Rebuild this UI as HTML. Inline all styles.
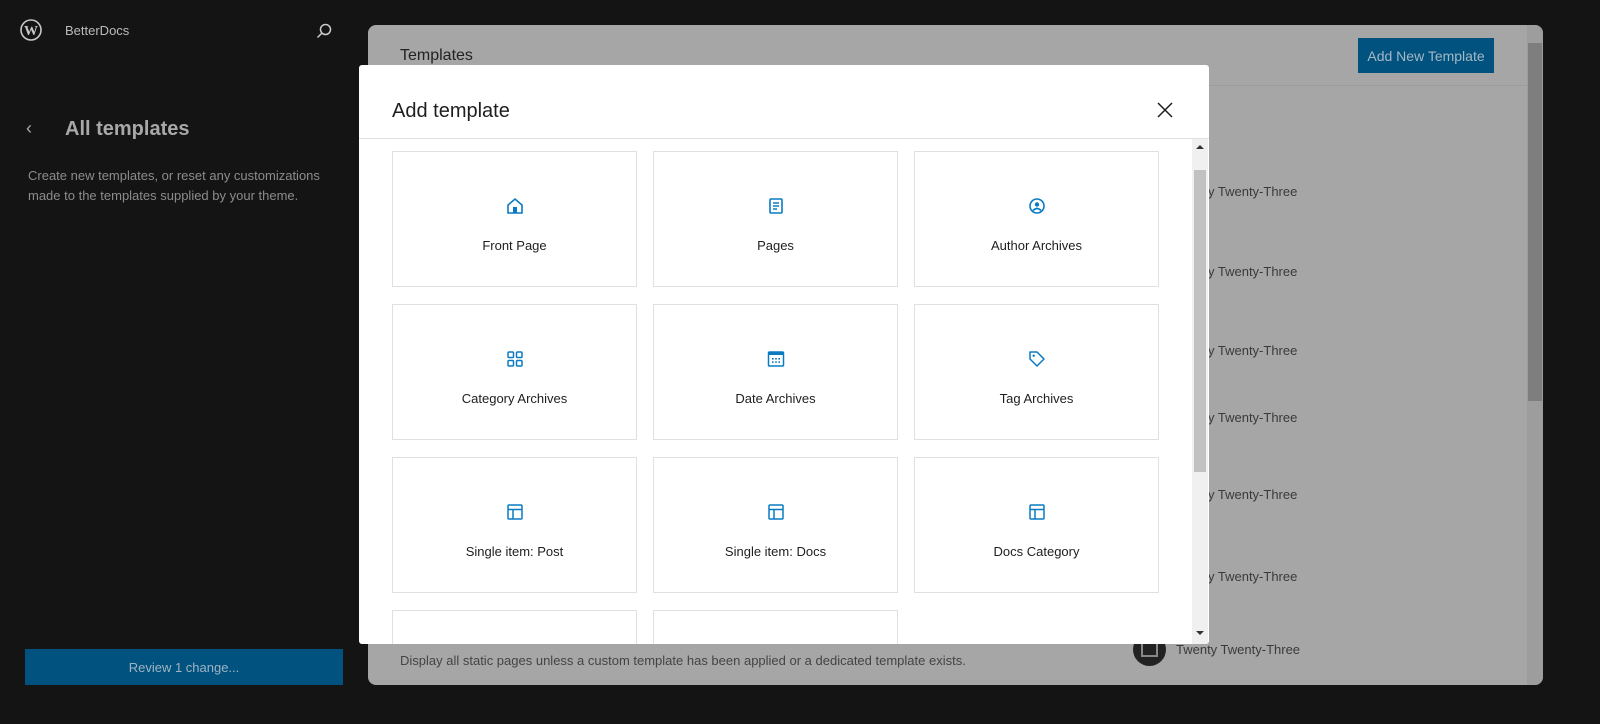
<!DOCTYPE html>
<html><head><meta charset="utf-8"><style>
*{box-sizing:border-box;margin:0;padding:0}
body{width:1600px;height:724px;background:#141414;font-family:"Liberation Sans",sans-serif;position:relative;overflow:hidden}
.abs{position:absolute}
.panel{left:368px;top:25px;width:1175px;height:660px;background:#a6a6a6;border-radius:8px;overflow:hidden}
.row{position:absolute;left:1176px;font-size:13px;color:#3a3a3a}
.card{position:absolute;width:245px;height:136px;border:1px solid #e0e0e0;background:#fff}
.card .ic{position:absolute;left:50%;top:42px;margin-left:-12px;width:24px;height:24px}
.card .lb{position:absolute;left:0;right:0;top:86px;text-align:center;font-size:13px;color:#1e1e1e}
</style></head><body>
<svg class="abs" style="left:20px;top:19px" width="22" height="22" viewBox="0 0 22 22"><circle cx="11" cy="11" r="10" fill="none" stroke="#c8c8c8" stroke-width="1.6"/><text x="11" y="16" text-anchor="middle" font-family="Liberation Serif" font-weight="bold" font-size="14" fill="#c8c8c8">W</text></svg>
<div class="abs" style="left:65px;top:23px;font-size:13px;color:#bbb">BetterDocs</div>
<svg class="abs" style="left:315px;top:22px" width="18" height="18" viewBox="0 0 18 18"><circle cx="10.5" cy="7.5" r="5" fill="none" stroke="#ccc" stroke-width="1.5"/><path d="M7 11 L2.5 15.5" stroke="#ccc" stroke-width="1.5"/></svg>
<div class="abs" style="left:26px;top:118px;font-size:18px;color:#aaa">‹</div>
<div class="abs" style="left:65px;top:118px;font-size:20px;font-weight:bold;color:#a8a8a8">All templates</div>
<div class="abs" style="left:28px;top:166px;font-size:13px;line-height:20px;color:#8c8c8c;width:310px">Create new templates, or reset any customizations made to the templates supplied by your theme.</div>
<div class="abs" style="left:25px;top:649px;width:318px;height:36px;background:#01527e;color:#9eb4c4;font-size:13px;text-align:center;line-height:38px">Review 1 change...</div>

<div class="abs panel">
 <div class="abs" style="left:32px;top:22px;font-size:16px;color:#222">Templates</div>
 <div class="abs" style="left:990px;top:13px;width:136px;height:35px;background:#01527e;color:#a4b8c6;font-size:14px;text-align:center;line-height:36px">Add New Template</div>
 <div class="abs" style="left:0;right:16px;top:60px;height:1px;background:#9c9c9c"></div>
 <div class="abs" style="right:0;top:0;width:16px;height:660px;background:#9d9d9d"></div>
 <div class="abs" style="right:1px;top:18px;width:14px;height:358px;background:#7e7e7e"></div>
 <div class="abs" style="left:32px;top:628px;font-size:13px;color:#444">Display all static pages unless a custom template has been applied or a dedicated template exists.</div>
 <div class="abs" style="left:765px;top:608px;width:33px;height:33px;border-radius:50%;background:#222"></div>
 <div class="abs" style="left:773px;top:617px;width:17px;height:15px;border:2px solid #888"></div>
</div>
<div class="row" style="top:184px;left:1208px">y Twenty-Three</div>
<div class="row" style="top:264px;left:1208px">y Twenty-Three</div>
<div class="row" style="top:343px;left:1208px">y Twenty-Three</div>
<div class="row" style="top:410px;left:1208px">y Twenty-Three</div>
<div class="row" style="top:487px;left:1208px">y Twenty-Three</div>
<div class="row" style="top:569px;left:1208px">y Twenty-Three</div>
<div class="row" style="top:642px">Twenty Twenty-Three</div>

<div class="abs" style="left:359px;top:65px;width:850px;height:579px;background:#fff;border-radius:3px;overflow:hidden">
 <div class="abs" style="left:33px;top:35px;font-size:20px;color:#1e1e1e">Add template</div>
 <svg class="abs" style="left:797px;top:36px" width="18" height="18" viewBox="0 0 18 18"><path d="M2 2L16 16M16 2L2 16" stroke="#1e1e1e" stroke-width="1.5"/></svg>
 <div class="abs" style="left:0;right:0;top:73px;height:1px;background:#e0e0e0"></div>
 <div class="abs" style="left:833px;top:74px;width:16px;height:505px;background:#f0f0f0"></div>
 <div class="abs" style="left:835px;top:105px;width:12px;height:302px;background:#c1c1c1"></div>
 <div class="abs" style="left:837px;top:80px;width:0;height:0;border-left:4px solid transparent;border-right:4px solid transparent;border-bottom:4px solid #333"></div>
 <div class="abs" style="left:837px;top:566px;width:0;height:0;border-left:4px solid transparent;border-right:4px solid transparent;border-top:4px solid #333"></div>

 <div class="card" style="left:33px;top:86px"><svg class="ic" viewBox="0 0 24 24"><path d="M5 11L12 5L19 11V19H5Z" fill="none" stroke="#0a7bc2" stroke-width="1.6"/><rect x="10" y="13" width="4" height="6" fill="#0a7bc2"/></svg><div class="lb">Front Page</div></div>
 <div class="card" style="left:294px;top:86px"><svg class="ic" viewBox="0 0 24 24"><rect x="6" y="5" width="12" height="14" rx="1" fill="none" stroke="#0a7bc2" stroke-width="1.6"/><path d="M9 9H15M9 12H15M9 15H13" stroke="#0a7bc2" stroke-width="1.4"/></svg><div class="lb">Pages</div></div>
 <div class="card" style="left:555px;top:86px"><svg class="ic" viewBox="0 0 24 24"><circle cx="12" cy="12" r="7" fill="none" stroke="#0a7bc2" stroke-width="1.6"/><circle cx="12" cy="10.5" r="2.2" fill="#0a7bc2"/><path d="M8 16.5Q12 12.5 16 16.5" fill="none" stroke="#0a7bc2" stroke-width="1.6"/></svg><div class="lb">Author Archives</div></div>

 <div class="card" style="left:33px;top:239px"><svg class="ic" viewBox="0 0 24 24"><g fill="none" stroke="#0a7bc2" stroke-width="1.5"><rect x="5" y="5" width="5.5" height="5.5" rx="1"/><rect x="13.5" y="5" width="5.5" height="5.5" rx="1"/><rect x="5" y="13.5" width="5.5" height="5.5" rx="1"/><rect x="13.5" y="13.5" width="5.5" height="5.5" rx="1"/></g></svg><div class="lb">Category Archives</div></div>
 <div class="card" style="left:294px;top:239px"><svg class="ic" viewBox="0 0 24 24"><rect x="4.5" y="5" width="15" height="14" rx="1" fill="none" stroke="#0a7bc2" stroke-width="1.5"/><rect x="4.5" y="5" width="15" height="3" fill="#0a7bc2"/><g fill="#0a7bc2"><rect x="8" y="11" width="1.6" height="1.6"/><rect x="11.2" y="11" width="1.6" height="1.6"/><rect x="14.4" y="11" width="1.6" height="1.6"/><rect x="8" y="14.3" width="1.6" height="1.6"/><rect x="11.2" y="14.3" width="1.6" height="1.6"/><rect x="14.4" y="14.3" width="1.6" height="1.6"/></g></svg><div class="lb">Date Archives</div></div>
 <div class="card" style="left:555px;top:239px"><svg class="ic" viewBox="0 0 24 24"><path d="M5 5H12L19 12L12 19L5 12Z" fill="none" stroke="#0a7bc2" stroke-width="1.5" stroke-linejoin="round"/><circle cx="8.7" cy="8.7" r="1.2" fill="#0a7bc2"/></svg><div class="lb">Tag Archives</div></div>

 <div class="card" style="left:33px;top:392px"><svg class="ic" viewBox="0 0 24 24"><rect x="5" y="5" width="14" height="14" rx="1" fill="none" stroke="#0a7bc2" stroke-width="1.5"/><path d="M5 9.5H19M10 9.5V19" stroke="#0a7bc2" stroke-width="1.5"/></svg><div class="lb">Single item: Post</div></div>
 <div class="card" style="left:294px;top:392px"><svg class="ic" viewBox="0 0 24 24"><rect x="5" y="5" width="14" height="14" rx="1" fill="none" stroke="#0a7bc2" stroke-width="1.5"/><path d="M5 9.5H19M10 9.5V19" stroke="#0a7bc2" stroke-width="1.5"/></svg><div class="lb">Single item: Docs</div></div>
 <div class="card" style="left:555px;top:392px"><svg class="ic" viewBox="0 0 24 24"><rect x="5" y="5" width="14" height="14" rx="1" fill="none" stroke="#0a7bc2" stroke-width="1.5"/><path d="M5 9.5H19M10 9.5V19" stroke="#0a7bc2" stroke-width="1.5"/></svg><div class="lb">Docs Category</div></div>

 <div class="card" style="left:33px;top:545px"></div>
 <div class="card" style="left:294px;top:545px"></div>
</div>
</body></html>
